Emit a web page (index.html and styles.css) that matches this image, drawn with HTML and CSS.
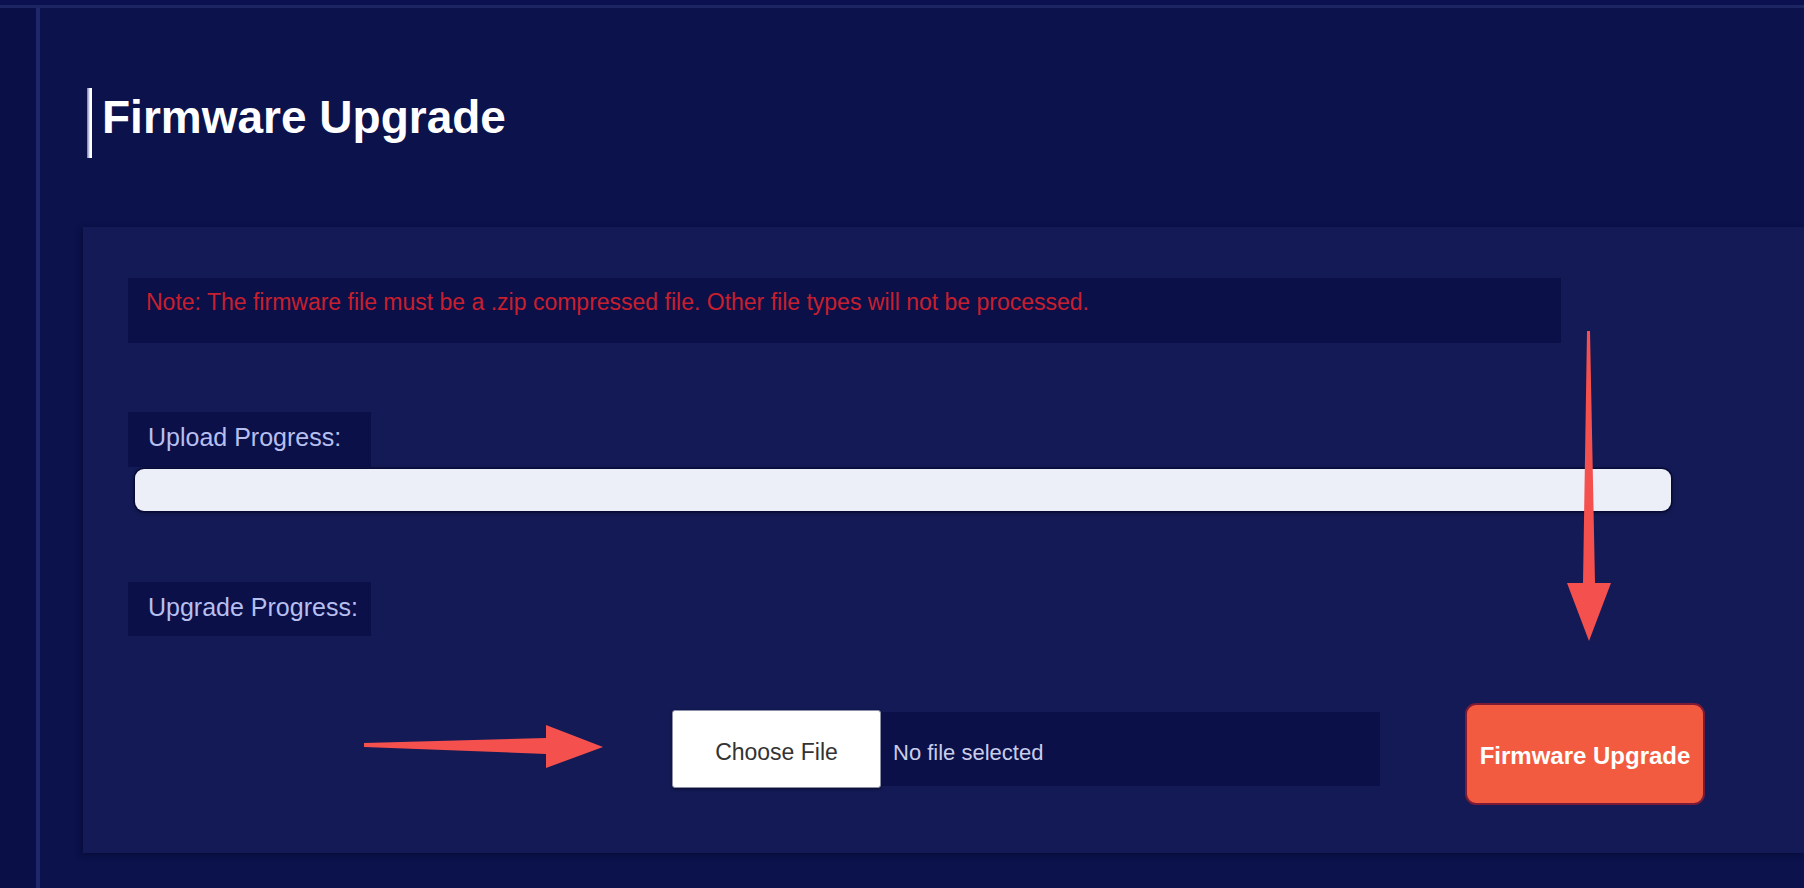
FILE: index.html
```html
<!DOCTYPE html>
<html lang="en">
<head>
<meta charset="utf-8">
<title>Firmware Upgrade</title>
<link rel="stylesheet" href="styles.css">
</head>
<body>
<div class="topbar"></div>
<div class="layout">
  <aside class="rail"></aside>
  <main class="content">
    <header class="page-head">
      <span class="title-bar"></span>
      <h1 class="title">Firmware Upgrade</h1>
    </header>
    <section class="card">
      <p class="note">Note: The firmware file must be a .zip compressed file. Other file types will not be processed.</p>
      <div class="label">Upload Progress:</div>
      <div class="progress"></div>
      <div class="label label-upgrade">Upgrade Progress:</div>
      <div class="actions">
        <div class="file-input">
          <button class="choose" type="button">Choose File</button>
          <span class="file-name">No file selected</span>
        </div>
        <button class="upgrade" type="button">Firmware Upgrade</button>
      </div>
      <svg class="arrow arrow-h" viewBox="0 0 240 44" aria-hidden="true">
        <polygon points="0,18 182,13 182,0 239,22 182,43 182,29 0,22"/>
      </svg>
      <svg class="arrow arrow-v" viewBox="0 0 46 314" aria-hidden="true">
        <polygon points="21,2 24,2 29,254 45,254 23,312 1,254 17,254"/>
      </svg>
    </section>
  </main>
</div>
</body>
</html>
```

FILE: styles.css
```css
html, body {
  margin: 0;
  height: 100%;
}

body {
  background: #0a1048;
  font-family: "Liberation Sans", Arial, sans-serif;
  overflow: hidden;
}

.topbar {
  height: 5px;
  background: #0b1150;
  border-bottom: 3px solid #1d2563;
}

.layout {
  display: flex;
  height: 880px;
}

.rail {
  width: 36px;
  background: #0a0f47;
  border-right: 4px solid #1f276a;
}

.content {
  flex: 1;
  background: #0b124c;
  display: flex;
  flex-direction: column;
}

.page-head {
  display: flex;
  align-items: flex-start;
  gap: 10px;
  margin: 80px 0 0 47px;
  height: 70px;
}

.title-bar {
  width: 5px;
  height: 70px;
  background: linear-gradient(90deg, #6f78b8, #ffffff 60%);
}

.title {
  margin: 0;
  padding-top: 6px;
  font-size: 46px;
  line-height: 46px;
  font-weight: 700;
  color: #ffffff;
}

.card {
  position: relative;
  margin: 69px 0 0 43px;
  height: 626px;
  box-sizing: border-box;
  padding: 51px 0 0 45px;
  background: #131a55;
  box-shadow: -2px 2px 6px rgba(0, 0, 20, 0.35);
}

.note {
  margin: 0;
  width: 1433px;
  height: 65px;
  box-sizing: border-box;
  padding: 12px 18px;
  background: #0b1049;
  color: #c81f2e;
  font-size: 23px;
  line-height: 25px;
}

.label {
  margin-top: 69px;
  width: 243px;
  height: 55px;
  box-sizing: border-box;
  padding: 11px 0 0 20px;
  background: #0b1049;
  color: #b7bfee;
  font-size: 25px;
  line-height: 28px;
  white-space: nowrap;
}

.label-upgrade {
  margin-top: 71px;
  height: 54px;
}

.progress {
  margin: 2px 0 0 7px;
  width: 1536px;
  height: 42px;
  background: #eceef8;
  border-radius: 9px;
  box-shadow: 0 0 0 1.5px #070b35, 0 1px 4px rgba(0, 0, 0, 0.5);
}

.actions {
  display: flex;
  align-items: flex-start;
  margin-top: 67px;
  padding-left: 544px;
}

.file-input {
  display: flex;
  align-items: center;
  margin-top: 7px;
  width: 708px;
}

.choose {
  width: 209px;
  height: 78px;
  padding-top: 7px;
  background: #ffffff;
  border: 1px solid #8c8fa8;
  border-radius: 3px;
  font-family: "Liberation Sans", Arial, sans-serif;
  font-size: 23px;
  color: #333333;
  box-shadow: 0 1px 3px rgba(0, 0, 0, 0.5);
}

.file-name {
  flex: 1;
  height: 74px;
  box-sizing: border-box;
  padding: 7px 0 0 12px;
  background: #0b1049;
  color: #c9cde9;
  font-size: 22px;
  line-height: 67px;
}

.upgrade {
  margin-left: 85px;
  width: 240px;
  height: 102px;
  padding-top: 4px;
  background: #f25b40;
  border: 2px solid #7d1a36;
  border-radius: 11px;
  color: #ffffff;
  font-family: "Liberation Sans", Arial, sans-serif;
  font-weight: 700;
  font-size: 24px;
}

.arrow {
  position: absolute;
  fill: #f4504e;
}

.arrow-h {
  left: 281px;
  top: 498px;
  width: 240px;
  height: 44px;
}

.arrow-v {
  left: 1483px;
  top: 102px;
  width: 46px;
  height: 314px;
}
```
